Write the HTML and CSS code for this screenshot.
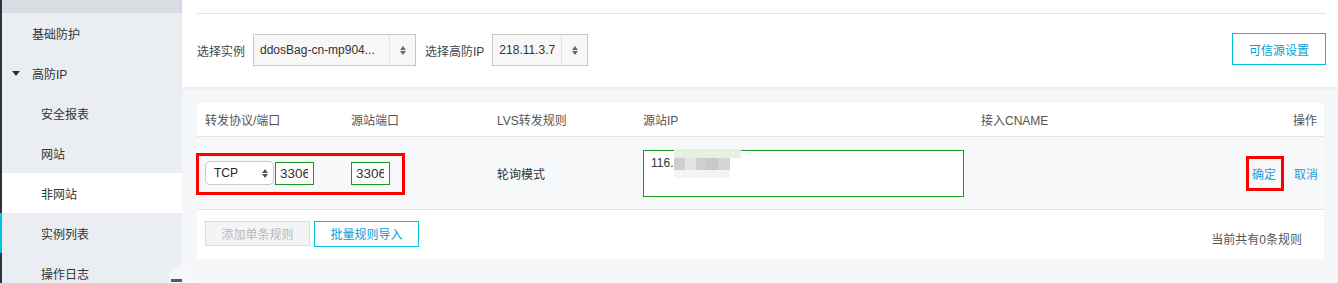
FILE: index.html
```html
<!DOCTYPE html>
<html lang="zh-CN">
<head>
<meta charset="utf-8">
<title>非网站</title>
<link rel="stylesheet" href="styles.css">
</head>
<body>
<aside class="sidebar">
  <div class="strip">
    <div class="strip-dark strip-top"></div>
    <div class="strip-cyan"></div>
    <div class="strip-dark strip-rest"></div>
  </div>
  <nav class="nav">
    <div class="nav-top"></div>
    <div class="nav-item">基础防护</div>
    <div class="nav-item nav-group"><span class="caret"></span>高防IP</div>
    <div class="nav-item nav-sub">安全报表</div>
    <div class="nav-item nav-sub">网站</div>
    <div class="nav-item nav-sub active">非网站</div>
    <div class="nav-item nav-sub">实例列表</div>
    <div class="nav-item nav-sub">操作日志</div>
  </nav>
</aside>

<main class="main">
  <section class="top-panel">
    <div class="panel-title"></div>
    <div class="filters">
      <span class="label">选择实例</span>
      <div class="select select-instance">
        <span class="select-text">ddosBag-cn-mp904...</span>
        <span class="select-arrow"><i class="up"></i><i class="down"></i></span>
      </div>
      <span class="label label-ip">选择高防IP</span>
      <div class="select select-ip">
        <span class="select-text">218.11.3.7</span>
        <span class="select-arrow"><i class="up"></i><i class="down"></i></span>
      </div>
      <button class="btn-outline btn-trust">可信源设置</button>
    </div>
  </section>

  <section class="card">
    <div class="row row-head">
      <div>转发协议/端口</div>
      <div>源站端口</div>
      <div>LVS转发规则</div>
      <div>源站IP</div>
      <div>接入CNAME</div>
      <div class="col-op">操作</div>
    </div>
    <div class="row row-body">
      <div class="cell-proto">
        <div class="native-select">
          <span>TCP</span>
          <span class="native-arrow"><i class="up"></i><i class="down"></i></span>
        </div>
        <input class="port-input" type="text" value="3306">
      </div>
      <div><input class="port-input" type="text" value="3306"></div>
      <div>轮询模式</div>
      <div>
        <div class="ip-area">
          <span>116.</span>
          <div class="redact">
            <div class="redact-top"></div>
            <div class="redact-mid">
              <b class="g1"></b><b class="g2"></b><b class="g1"></b><b class="g3"></b><b class="g4"></b>
            </div>
            <div class="redact-bot"></div>
          </div>
        </div>
      </div>
      <div></div>
      <div class="col-op ops">
        <a class="link link-ok">确定</a>
        <a class="link">取消</a>
      </div>
      <div class="mark-port"></div>
    </div>
    <div class="row-foot">
      <button class="btn-disabled">添加单条规则</button>
      <button class="btn-outline btn-batch">批量规则导入</button>
      <span class="count">当前共有0条规则</span>
    </div>
  </section>
</main>

<div class="collapse-handle"><span></span></div>
</body>
</html>
```

FILE: styles.css
```css
* { box-sizing: border-box; }

html, body {
  margin: 0;
  padding: 0;
}

body {
  width: 1338px;
  height: 283px;
  overflow: hidden;
  display: flex;
  position: relative;
  font-family: "Liberation Sans", "Noto Sans CJK SC", sans-serif;
  font-size: 12px;
  color: #333;
  background: #f5f6f8;
}

/* ---------- sidebar ---------- */
.sidebar {
  width: 182px;
  flex: none;
  display: flex;
}

.strip {
  width: 2px;
  display: flex;
  flex-direction: column;
}
.strip-dark { background: #2e3140; }
.strip-top { height: 213px; }
.strip-cyan { height: 40px; background: #00c1de; }
.strip-rest { flex: 1; }

.nav {
  flex: 1;
  background: #eaedf1;
}
.nav-top {
  height: 13px;
  background: #d9dde3;
}
.nav-item {
  height: 40px;
  display: flex;
  align-items: center;
  padding-left: 30px;
  color: #333;
}
.nav-sub { padding-left: 39px; }
.nav-item.active { background: #fff; }
.nav-group { padding-left: 10px; }
.caret {
  width: 0;
  height: 0;
  border-left: 4px solid transparent;
  border-right: 4px solid transparent;
  border-top: 5px solid #333;
  margin-right: 12px;
  margin-top: 1px;
}

/* ---------- main ---------- */
.main {
  flex: 1;
  min-width: 0;
}

.top-panel {
  background: #fff;
  height: 87px;
  padding: 0 12px 0 15px;
  box-shadow: 0 1px 4px rgba(0, 0, 0, 0.07);
  position: relative;
  z-index: 1;
}
.panel-title {
  height: 14px;
  border-bottom: 1px solid #e3e3e3;
}
.filters {
  display: flex;
  align-items: center;
  margin-top: 20px;
  height: 32px;
}
.label { color: #444; margin-right: 8px; }
.label-ip { margin-left: 9px; }

.select {
  height: 32px;
  border: 1px solid #c8c8c8;
  background: #f7f7f7;
  display: flex;
  align-items: center;
}
.select-instance { width: 163px; }
.select-ip { width: 96px; }
.select-text {
  flex: 1;
  padding-left: 6px;
  color: #333;
  white-space: nowrap;
  overflow: hidden;
}
.select-arrow {
  width: 26px;
  height: 100%;
  border-left: 1px solid #e2e2e2;
  display: flex;
  flex-direction: column;
  align-items: center;
  justify-content: center;
  gap: 1px;
}
.up, .down {
  display: block;
  width: 0;
  height: 0;
  border-left: 3.5px solid transparent;
  border-right: 3.5px solid transparent;
}
.up { border-bottom: 4px solid #666; }
.down { border-top: 4px solid #666; }

.btn-outline {
  font-family: inherit;
  font-size: 12px;
  background: #fff;
  border: 1px solid #00c1de;
  color: #00a1d6;
  padding: 0;
  cursor: pointer;
}
.btn-trust {
  margin-left: auto;
  width: 94px;
  height: 32px;
  margin-top: -2px;
}

/* ---------- card / table ---------- */
.card {
  background: #fff;
  margin: 16px 14px 0 15px;
}
.row {
  display: grid;
  grid-template-columns: 146px 146px 146px 338px 1fr auto;
  align-items: center;
  padding: 0 6px 0 8px;
  position: relative;
}
.row-head {
  height: 34px;
  border-bottom: 1px solid #e1e4e8;
  color: #555;
}
.row-head .col-op { margin-right: 1px; }
.col-op { text-align: right; }

.row-body {
  height: 73px;
  background: #f7f8fa;
  border-bottom: 1px solid #e1e4e8;
}
.cell-proto {
  display: flex;
  align-items: center;
  gap: 1px;
}
.native-select {
  width: 69px;
  height: 24px;
  border: 1px solid #c9c9c9;
  border-radius: 5px;
  background: #fff;
  display: flex;
  align-items: center;
  justify-content: space-between;
  padding: 0 5px 0 8px;
  color: #222;
}
.native-arrow {
  display: flex;
  flex-direction: column;
  gap: 1px;
}
.native-arrow .up { border-bottom-color: #555; }
.native-arrow .down { border-top-color: #555; }

.port-input {
  width: 39px;
  height: 23px;
  border: 1px solid #1a9a1a;
  background: #fff;
  font-family: "Liberation Sans", sans-serif;
  font-size: 13.5px;
  color: #333;
  padding: 0 5px 0 4px;
  margin: 1px 0 0 0;
  outline: none;
}

.ip-area {
  width: 321px;
  height: 47px;
  border: 1px solid #1a9a1a;
  background: #fff;
  padding: 5px 0 0 7px;
  color: #333;
  font-size: 12px;
  position: relative;
}
.redact {
  position: absolute;
  left: 30px;
  top: -2px;
}
.redact-top {
  width: 67px;
  height: 9px;
  background: #e5f1e3;
}
.redact-mid { display: flex; height: 12px; }
.redact-mid b { display: block; width: 11px; height: 12px; }
.redact-mid .g1 { background: #cfcfd1; }
.redact-mid .g2 { background: #e4e4e6; }
.redact-mid .g3 { background: #c9c9cb; }
.redact-mid .g4 { background: #d4d4d6; width: 12px; }
.redact-bot {
  width: 56px;
  height: 8px;
  background: #f4f4f4;
}

.ops {
  display: flex;
  gap: 18px;
  justify-content: flex-end;
}
.link {
  color: #2b9bd8;
  cursor: pointer;
}
.link-ok { position: relative; }
.link-ok::after {
  content: "";
  position: absolute;
  left: -6px;
  right: -8px;
  top: -9px;
  bottom: -9px;
  border: 3px solid #f00;
}

.mark-port {
  position: absolute;
  left: -1px;
  top: 16px;
  width: 209px;
  height: 42px;
  border: 3px solid #f00;
}

.row-foot {
  height: 49px;
  display: flex;
  align-items: center;
  padding: 0 22px 0 8px;
  gap: 4px;
}
.btn-disabled {
  width: 105px;
  height: 25px;
  font-family: inherit;
  font-size: 12px;
  background: #f4f4f4;
  border: 1px solid #dcdcdc;
  color: #b8b8b8;
  padding: 0;
  margin-top: -2px;
}
.btn-batch {
  width: 105px;
  height: 26px;
  margin-top: -2px;
}
.count {
  margin-left: auto;
  color: #555;
  margin-top: 7px;
}

/* collapse handle at the sidebar edge */
.collapse-handle {
  position: absolute;
  left: 169px;
  top: 263px;
  width: 28px;
  height: 20px;
  background: #f6f7f9;
  clip-path: polygon(13px 0, 100% 0, 100% 100%, 0 100%, 0 9px);
}
.collapse-handle span {
  position: absolute;
  left: 2px;
  top: 16px;
  width: 11px;
  height: 3px;
  background: #4b5b72;
}
```
